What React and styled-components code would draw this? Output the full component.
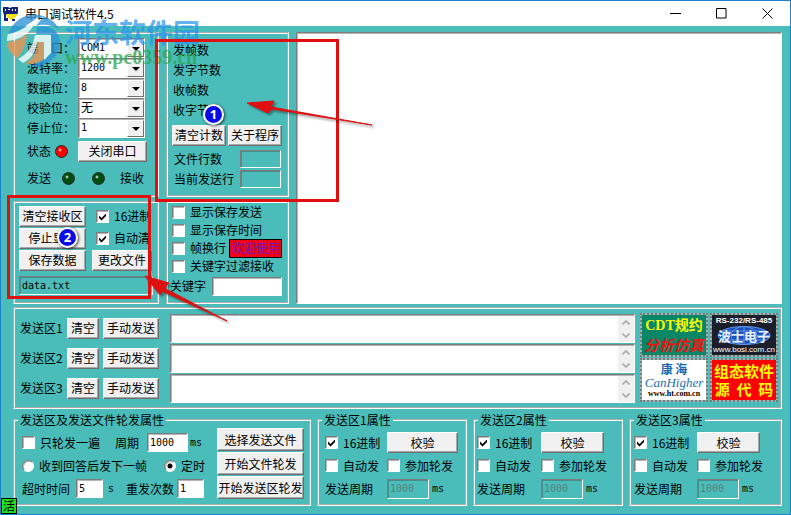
import styled, { createGlobalStyle, css } from "styled-components";

const TEAL = "#4abdbb";

const GlobalStyle = createGlobalStyle`
  * {
    box-sizing: border-box;
  }
  body {
    margin: 0;
    font: 12px/16px "Noto Sans CJK SC", sans-serif;
    color: #000;
  }
  button, input, select, textarea {
    margin: 0;
    font: inherit;
    color: inherit;
    border-radius: 0;
  }
`;

const sunken = css`
  border: 1px solid;
  border-color: #7d7d7d #fff #fff #7d7d7d;
  box-shadow: inset 1px 1px 0 rgba(70, 70, 70, 0.4);
`;

const Window = styled.div`
  position: relative;
  min-height: 100vh;
  display: flex;
  flex-direction: column;
  border: 1px solid #1c82cc;
  background: ${TEAL};
  overflow: hidden;
  white-space: nowrap;
`;

const TitleBar = styled.header`
  display: flex;
  align-items: center;
  height: 25px;
  padding-left: 2px;
  background: #fff;
`;

const Title = styled.h1`
  flex: 1;
  margin: 0 0 0 6px;
  font-size: 12px;
  font-weight: 400;
`;

const WindowButton = styled.button`
  display: flex;
  align-items: center;
  justify-content: center;
  width: 46px;
  height: 24px;
  padding: 0;
  border: 0;
  background: none;
`;

const Body = styled.main`
  flex: 1;
  display: flex;
  flex-direction: column;
  padding: 6px 8px 8px 12px;
`;

const Top = styled.div`
  flex: 1;
  display: grid;
  grid-template-columns: 146px 123px 1fr;
  grid-template-rows: 165px 1fr;
  gap: 4px 7px;
`;

const Group = styled.fieldset`
  min-width: 0;
  margin: 0;
  padding: ${(p) => p.$pad || "0"};
  border: 2px groove #fff;
`;

const Legend = styled.legend`
  height: 16px;
  margin-left: 3px;
  padding: 0 2px;
`;

const Line = styled.div`
  display: flex;
  align-items: center;
  height: ${(p) => p.$h || 20}px;
  gap: ${(p) => p.$gap || 0}px;
  margin-top: ${(p) => p.$top || 0}px;
  padding-left: ${(p) => p.$indent || 0}px;
`;

const Caption = styled.label`
  flex: none;
  width: ${(p) => (p.$w ? `${p.$w}px` : "auto")};
`;

const Unit = styled.span`
  margin-left: 2px;
  font: 10px/16px "DejaVu Sans Mono", monospace;
`;

const Button = styled.button`
  flex: none;
  width: ${(p) => (p.$w ? `${p.$w}px` : "auto")};
  height: ${(p) => p.$h || 21}px;
  padding: 0;
  line-height: 16px;
  border: 1px solid;
  border-color: #fff #6e6e6e #6e6e6e #fff;
  box-shadow: inset -1px -1px 0 #a8a8a8;
  background: #f0f0f0;
`;

const Field = styled.input`
  ${sunken}
  flex: none;
  width: ${(p) => (p.$w ? `${p.$w}px` : "100%")};
  height: ${(p) => p.$h || 19}px;
  padding: 0 2px;
  font: 10px/14px "DejaVu Sans Mono", monospace;
  background: ${(p) => (p.$flat ? TEAL : "#fff")};
  &:disabled {
    color: #5b7f7f;
  }
`;

const SelectBox = styled.span`
  ${sunken}
  position: relative;
  display: flex;
  width: 67px;
  height: 20px;
  background: #fff;
`;

const Select = styled.select`
  appearance: none;
  width: 100%;
  padding: 0 18px 0 2px;
  border: 0;
  background: none;
  font: ${(p) => (p.$cjk ? 12 : 10)}px/16px "DejaVu Sans Mono", "Noto Sans CJK SC", monospace;
`;

const DropArrow = styled.span`
  position: absolute;
  top: 1px;
  right: 0;
  display: flex;
  align-items: center;
  justify-content: center;
  width: 17px;
  height: 17px;
  border: 1px solid;
  border-color: #fff #6e6e6e #6e6e6e #fff;
  background: #f0f0f0;
  pointer-events: none;
`;

const CheckLabel = styled.label`
  display: flex;
  align-items: center;
  gap: 5px;
  width: ${(p) => (p.$w ? `${p.$w}px` : "auto")};
  margin-left: ${(p) => p.$left || 0}px;
  overflow: hidden;
`;

const Tick = styled.input`
  ${sunken}
  appearance: none;
  flex: none;
  width: 13px;
  height: 13px;
  background: #fff;
  &:checked {
    background: #fff
      url("data:image/svg+xml,%3Csvg xmlns='http://www.w3.org/2000/svg' viewBox='0 0 9 9'%3E%3Cpath d='M1 3.5 3.5 6 8 1.5V4L3.5 8.500 1 6z'/%3E%3C/svg%3E")
      center / 9px 9px no-repeat;
  }
`;

const Dot = styled.input`
  ${sunken}
  appearance: none;
  flex: none;
  width: 12px;
  height: 12px;
  border-radius: 50%;
  background: #fff;
  &:checked {
    background: radial-gradient(circle, #000 2px, #fff 3px);
  }
`;

const Led = styled.span`
  width: 13px;
  height: 13px;
  border: 1px solid #222;
  border-radius: 50%;
  background: radial-gradient(circle at 4px 4px, #fff 0, ${(p) => p.$color} 2px);
`;

const Welcome = styled.span`
  width: 53px;
  height: 19px;
  margin-left: 3px;
  border: 1px solid #000;
  text-align: center;
  line-height: 16px;
  color: #6a1ad0;
  background: #f00014;
`;

const Log = styled.textarea`
  ${sunken}
  grid-column: 3;
  grid-row: 1 / 3;
  width: 100%;
  resize: none;
  background: #fff;
`;

const SendGroup = styled(Group)`
  display: flex;
  gap: 5px;
  height: 102px;
  margin-top: 3px;
  padding: 4px 2px 0 5px;
`;

const SendRows = styled.div`
  flex: 1;
`;

const SendBox = styled.div`
  ${sunken}
  flex: 1;
  display: flex;
  height: 29px;
  margin-left: 7px;
  background: #fff;
  textarea {
    flex: 1;
    padding: 2px;
    border: 0;
    resize: none;
    overflow: hidden;
    background: none;
  }
`;

const ScrollBar = styled.span`
  display: flex;
  flex-direction: column;
  align-items: center;
  justify-content: space-between;
  width: 16px;
  margin-top: 1px;
  padding: 4px 0;
  background: #f0f0f0;
`;

const Logos = styled.div`
  display: grid;
  grid-template-columns: 68px 68px;
  grid-template-rows: 44px 44px;
  gap: 1px 2px;
`;

const Logo = styled.button`
  display: flex;
  flex-direction: column;
  align-items: center;
  justify-content: center;
  padding: 0;
  border: 2px dotted #6f7f80;
  background: linear-gradient(${(p) => p.$bg}, ${(p) => p.$bg}) padding-box, #a9b3b3 border-box;
  overflow: hidden;
`;

const LogoText = styled.span`
  position: relative;
  font: ${(p) => p.$font};
  color: ${(p) => p.$color};
  white-space: pre;
`;

const Globe = styled.svg`
  position: absolute;
  inset: 0;
`;

const GlobeLine = styled.span`
  position: relative;
  width: 54px;
  height: 19px;
`;

const Bottom = styled.div`
  display: grid;
  grid-template-columns: 298fr 150fr 150fr 153fr;
  gap: 6px;
  height: 94px;
  margin-top: 3px;
`;

const Split = styled.div`
  display: flex;
  justify-content: space-between;
  padding: 0 5px 0 7px;
`;

const Stack = styled.div`
  display: flex;
  flex-direction: column;
  gap: 1px;
`;

const AreaGrid = styled.div`
  display: grid;
  grid-template-columns: ${(p) => p.$first}px auto;
  grid-auto-rows: 23px;
  align-items: center;
  justify-content: start;
  padding: 3px 0 0 ${(p) => p.$left}px;
`;

const Active = styled.span`
  position: absolute;
  left: 0;
  bottom: 0;
  width: 16px;
  height: 16px;
  border: 1px solid #000;
  line-height: 13px;
  text-align: center;
  background: #1fe01f;
`;

/* annotations lying over the window */
const Frame = styled.div`
  position: absolute;
  left: ${(p) => p.$x}px;
  top: ${(p) => p.$y}px;
  width: ${(p) => p.$w}px;
  height: ${(p) => p.$h}px;
  border: 3px solid #e01010;
  pointer-events: none;
`;

const Marker = styled.span`
  position: absolute;
  left: ${(p) => p.$x}px;
  top: ${(p) => p.$y}px;
  width: 21px;
  height: 21px;
  border: 2px solid #fff;
  border-radius: 50%;
  box-shadow: 1px 1px 3px rgba(0, 0, 0, 0.7);
  font: bold 13px/17px "Open Sans", sans-serif;
  text-align: center;
  color: #fff;
  background: #0a0ae6;
`;

const Arrows = styled.svg`
  position: absolute;
  left: 0;
  top: 0;
  filter: drop-shadow(2px 2px 1px rgba(0, 0, 0, 0.4));
  pointer-events: none;
`;

const Watermark = styled.div`
  position: absolute;
  left: 5px;
  top: 9px;
  display: flex;
  gap: 3px;
  pointer-events: none;
`;

const SiteName = styled.div`
  padding-top: 6px;
  font: bold 27px/32px "Noto Sans CJK SC", sans-serif;
  color: rgba(40, 150, 235, 0.72);
`;

const SiteUrl = styled.div`
  font: bold 20px/18px "Liberation Serif", serif;
  color: rgba(40, 165, 75, 0.75);
`;

const PORT = [
  ["port", "端　口：", "COM1"],
  ["baud", "波特率：", "1200"],
  ["data", "数据位：", "8"],
  ["parity", "校验位：", "无"],
  ["stop", "停止位：", "1"],
];

const AREAS = [
  { n: 1, left: 6, first: 62, button: 71 },
  { n: 2, left: 2, first: 64, button: 63 },
  { n: 3, left: 3, first: 63, button: 63 },
];

function Check({ children, ...rest }) {
  const { $w, $left, ...input } = rest;
  return (
    <CheckLabel $w={$w} $left={$left}>
      <Tick type="checkbox" {...input} />
      {children}
    </CheckLabel>
  );
}

function Chevron({ down }) {
  return (
    <svg width="8" height="5" viewBox="0 0 8 5" fill="none" stroke="#a9a9a9" strokeWidth="1.6">
      <path d={down ? "M.5.5 4 4 7.500.5" : "M.5 4.500 4 1l3.500 3.500"} />
    </svg>
  );
}

function PortGroup() {
  return (
    <Group $pad="4px 0 0 12px">
      {PORT.map(([id, label, value]) => (
        <Line key={id}>
          <Caption htmlFor={id} $w={51}>{label}</Caption>
          <SelectBox>
            <Select id={id} defaultValue={value} $cjk={id === "parity"}>
              <option>{value}</option>
            </Select>
            <DropArrow>
              <svg width="8" height="4" viewBox="0 0 8 4"><path d="M0 0h8L4 4z" /></svg>
            </DropArrow>
          </SelectBox>
        </Line>
      ))}
      <Line $h={22} $top={2} $gap={10}>
        <Line $gap={4}>
          <span>状态</span>
          <Led $color="#f00" />
        </Line>
        <Button $w={69}>关闭串口</Button>
      </Line>
      <Line $top={6} $gap={17}>
        <Line $gap={11}>
          <span>发送</span>
          <Led $color="#004d10" />
        </Line>
        <Line $gap={15}>
          <Led $color="#004d10" />
          <span>接收</span>
        </Line>
      </Line>
    </Group>
  );
}

function CounterGroup() {
  return (
    <Group $pad="6px 0 0 4px">
      {["发帧数", "发字节数", "收帧数", "收字节数"].map((t) => (
        <Line key={t} $indent={1}>{t}</Line>
      ))}
      <Line $top={5} $gap={2}>
        <Button $w={54}>清空计数</Button>
        <Button $w={54}>关于程序</Button>
      </Line>
      <Line $top={4} $indent={2}>
        <Caption htmlFor="lines" $w={66}>文件行数</Caption>
        <Field id="lines" $w={41} $h={18} $flat readOnly />
      </Line>
      <Line $indent={2}>
        <Caption htmlFor="current" $w={66}>当前发送行</Caption>
        <Field id="current" $w={41} $h={18} $flat readOnly />
      </Line>
    </Group>
  );
}

function ReceiveGroup() {
  return (
    <Group $pad="2px 4px 0">
      <Line $h={22}>
        <Button $w={67}>清空接收区</Button>
        <Check defaultChecked $left={10} $w={54}>16进制</Check>
      </Line>
      <Line $h={22}>
        <Button $w={67}>停止显示</Button>
        <Check defaultChecked $left={10} $w={54}>自动清</Check>
      </Line>
      <Line $h={22} $gap={6}>
        <Button $w={67}>保存数据</Button>
        <Button $w={60}>更改文件</Button>
      </Line>
      <Line $top={4}>
        <Field aria-label="文件" $w={134} $flat defaultValue="data.txt" />
      </Line>
    </Group>
  );
}

function FilterGroup() {
  return (
    <Group $pad="0 0 0 2px">
      <Line $h={18} $indent={2}><Check>显示保存发送</Check></Line>
      <Line $h={18} $indent={2}><Check>显示保存时间</Check></Line>
      <Line $h={18} $indent={2}>
        <Check>帧换行</Check>
        <Welcome>欢迎使用</Welcome>
      </Line>
      <Line $h={18} $indent={2}><Check>关键字过滤接收</Check></Line>
      <Line $top={1}>
        <Caption htmlFor="keyword" $w={42}>关键字</Caption>
        <Field id="keyword" $w={70} />
      </Line>
    </Group>
  );
}

function SendAreas() {
  return (
    <SendGroup as="section">
      <SendRows>
        {[1, 2, 3].map((n) => (
          <Line key={n} $h={30} $gap={4}>
            <Caption htmlFor={`send${n}`} $w={43}>发送区{n}</Caption>
            <Button $w={32}>清空</Button>
            <Button $w={56}>手动发送</Button>
            <SendBox>
              <textarea id={`send${n}`} rows={1} />
              <ScrollBar>
                <Chevron />
                <Chevron down />
              </ScrollBar>
            </SendBox>
          </Line>
        ))}
      </SendRows>
      <Logos>
        <Logo $bg="#078765">
          <LogoText $font='bold 14px/20px "Liberation Serif", "Noto Sans CJK SC", serif' $color="#ff0">CDT规约</LogoText>
          <LogoText $font='italic bold 15px/18px "Noto Sans CJK SC", sans-serif' $color="#f01212">分析仿真</LogoText>
        </Logo>
        <Logo $bg="#1b1e2b">
          <LogoText $font='bold 8px/10px "Liberation Sans", sans-serif' $color="#fff">RS-232/RS-485</LogoText>
          <GlobeLine>
            <Globe viewBox="0 0 54 19" fill="none" stroke="#5d94e8">
              <ellipse cx="27" cy="9.500" rx="26" ry="9" fill="#1c4fb8" />
              <ellipse cx="27" cy="9.500" rx="13" ry="9" />
              <path d="M1 9.500h52M27 .5v18M5 5h44M5 14h44" />
            </Globe>
            <LogoText $font='bold 13px/19px "Noto Sans CJK SC", sans-serif' $color="#e6f0ff">波士电子</LogoText>
          </GlobeLine>
          <LogoText $font='8px/10px "Liberation Sans", sans-serif' $color="#fff">www.bosi.com.cn</LogoText>
        </Logo>
        <Logo $bg="#fff">
          <LogoText $font='bold 12px/14px "Noto Sans CJK SC", sans-serif' $color="#1767ad">康 海</LogoText>
          <LogoText $font='italic 13px/13px "Liberation Serif", serif' $color="#2470b0">CanHigher</LogoText>
          <LogoText $font='bold 8px/10px "Liberation Serif", serif' $color="#000">www.ht.com.cn</LogoText>
        </Logo>
        <Logo $bg="#f00">
          <LogoText $font='bold 15px/18px "Noto Sans CJK SC", sans-serif' $color="#ff0">组态软件</LogoText>
          <LogoText $font='bold 15px/18px "Noto Sans CJK SC", sans-serif' $color="#ff0">{"源  代  码"}</LogoText>
        </Logo>
      </Logos>
    </SendGroup>
  );
}

function LoopGroup() {
  return (
    <Group>
      <Legend>发送区及发送文件轮发属性</Legend>
      <Split>
        <div>
          <Line $h={23} $top={3}>
            <Check $w={93}>只轮发一遍</Check>
            <Caption htmlFor="cycle" $w={32}>周期</Caption>
            <Field id="cycle" $w={41} defaultValue="1000" />
            <Unit>ms</Unit>
          </Line>
          <Line $h={23}>
            <CheckLabel $w={142}>
              <Dot type="radio" name="mode" />
              收到回答后发下一帧
            </CheckLabel>
            <CheckLabel>
              <Dot type="radio" name="mode" defaultChecked />
              定时
            </CheckLabel>
          </Line>
          <Line $h={23}>
            <Caption htmlFor="timeout" $w={54}>超时时间</Caption>
            <Field id="timeout" $w={27} defaultValue="5" />
            <Line $indent={3} $gap={12}>
              <Unit>s</Unit>
              <Caption htmlFor="retry" $w={51}>重发次数</Caption>
            </Line>
            <Field id="retry" $w={27} defaultValue="1" />
          </Line>
        </div>
        <Stack>
          <Button $w={87} $h={23}>选择发送文件</Button>
          <Button $w={87} $h={23}>开始文件轮发</Button>
          <Button $w={87} $h={23}>开始发送区轮发</Button>
        </Stack>
      </Split>
    </Group>
  );
}

function AreaGroup({ n, left, first, button }) {
  return (
    <Group>
      <Legend>发送区{n}属性</Legend>
      <AreaGrid $left={left} $first={first}>
        <Check defaultChecked>16进制</Check>
        <Button $w={button}>校验</Button>
        <Check>自动发</Check>
        <Check>参加轮发</Check>
        <Caption htmlFor={`period${n}`}>发送周期</Caption>
        <Line $gap={1}>
          <Field id={`period${n}`} $w={42} $h={20} $flat disabled defaultValue="1000" />
          <Unit>ms</Unit>
        </Line>
      </AreaGrid>
    </Group>
  );
}

export default function App() {
  return (
    <Window>
      <GlobalStyle />
      <TitleBar>
        <svg width="16" height="16" viewBox="0 0 16 16">
          <path d="M0 1h5l2 1 2-1h6v6l-2 2H1L0 6z" fill="#14237a" />
          <path d="M2 3h1v2H2zM5 3h2v1H5zM9 3h1v2H9zM12 3h1v2h-1z" fill="#fff" />
          <path d="M3 8h12l-3 4-4 2-4-3z" fill="#f4e21b" />
          <path d="M1 9h2v3h2v3H1zM9 13h3v2H9z" fill="#14237a" />
        </svg>
        <Title>串口调试软件4.5</Title>
        <WindowButton aria-label="最小化">
          <svg width="11" height="11" stroke="#000"><path d="M0 5.500h11" /></svg>
        </WindowButton>
        <WindowButton aria-label="最大化">
          <svg width="11" height="11" stroke="#000" fill="none"><path d="M.5.5h9.500v9.500H.5z" /></svg>
        </WindowButton>
        <WindowButton aria-label="关闭">
          <svg width="11" height="11" stroke="#000"><path d="m.5.5 10 10m0-10-10 10" /></svg>
        </WindowButton>
      </TitleBar>
      <Body>
        <Top>
          <PortGroup />
          <CounterGroup />
          <ReceiveGroup />
          <FilterGroup />
          <Log aria-label="接收区" />
        </Top>
        <SendAreas />
        <Bottom>
          <LoopGroup />
          {AREAS.map((area) => (
            <AreaGroup key={area.n} {...area} />
          ))}
        </Bottom>
      </Body>
      <Active>活</Active>

      <Watermark>
        <svg width="56" height="58" viewBox="0 0 56 58" opacity=".78">
          <path d="M2 24C7 10 20 3 32 5c9 1 17 6 21 14-9-5-17-5-23-3 3-4 5-7 8-9C24 9 17 22 2 24z" fill="#2c93d8" />
          <path d="M31 17c12-3 22 4 23 14 1 11-6 20-17 24-5 2-10 2-14 1 14-3 22-13 22-25 0-3-1-5-2-7H30z" fill="#2c93d8" />
          <path d="M32 7C26 22 16 30 1 31c0-2 0-5 1-7C17 22 24 13 32 7zM29 25h16v18l-7 7V32h-7c-1 10-6 17-14 21l-5-4c10-5 15-13 17-24z" fill="#fff" />
          <path d="M1 32c7 0 14-3 20-8-1 10-4 19-10 24C5 44 1 38 1 32z" fill="#ee9450" />
          <path d="M31 32h7v17c-5 4-12 6-19 5 8-5 12-12 12-22z" fill="#ee9450" />
        </svg>
        <div>
          <SiteName>河东软件园</SiteName>
          <SiteUrl>www.pc0359.cn</SiteUrl>
        </div>
      </Watermark>
      <Frame $x={154} $y={38} $w={184} $h={163} />
      <Frame $x={6} $y={194} $w={144} $h={104} />
      <Arrows width="400" height="340" fill="#e01010" stroke="#e01010">
        <path d="M246 102 273 100 270 106 371 124 271 108 267 112z" />
        <path d="M144 275 168 282 163 287 226 320 161 290 159 294z" />
      </Arrows>
      <Marker $x={202} $y={103}>1</Marker>
      <Marker $x={56} $y={226}>2</Marker>
    </Window>
  );
}
